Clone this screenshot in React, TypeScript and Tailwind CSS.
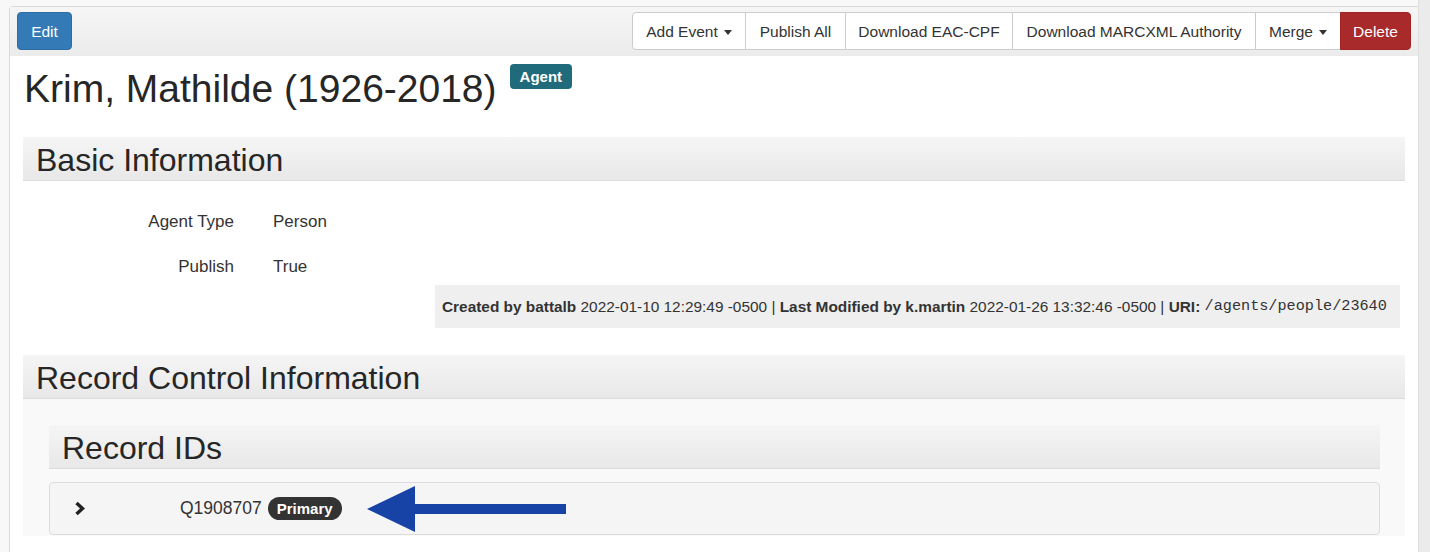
import React from 'react';

const font = { fontFamily: '"Liberation Sans", Arial, sans-serif' };

function Caret() {
  return <span className="ml-[6px] inline-block h-0 w-0 border-x-[4.5px] border-t-[5px] border-x-transparent border-t-[#333] align-middle" />;
}

function ToolButton({ label, w, caret }: { label: string; w: string; caret?: boolean }) {
  return (
    <button className={`${w} h-[38px] pt-[2px] flex items-center justify-center bg-white text-[#333] text-[15.5px] border border-[#ccc] -ml-px first:ml-0 first:rounded-l-[4px]`}>
      {label}
      {caret && <Caret />}
    </button>
  );
}

function SectionHeader({ title }: { title: string }) {
  return (
    <div className="h-[44px] bg-gradient-to-b from-[#f5f5f5] to-[#e8e8e8] border-b border-[#dcdcdc] pl-[13px] pt-[2px]">
      <h2 className="text-[32px] leading-[42px] text-[#262626]">{title}</h2>
    </div>
  );
}

export default function App() {
  return (
    <div className="min-h-screen bg-[#f8f8f8] flex" style={font}>
      <div className="flex-1 pl-[9px] pt-[6px]">
        <div className="h-full bg-white border-l border-t border-[#d9d9d9] rounded-tl-[4px]">
          {/* toolbar */}
          <div className="h-[49px] bg-gradient-to-b from-[#f6f6f6] to-[#ebebeb] flex items-start justify-between pt-[5px] pl-[7px] pr-[7px]">
            <button className="w-[55px] h-[38px] pt-[2px] rounded-[4px] bg-[#337ab7] border border-[#2e6da4] text-white text-[15.5px]">Edit</button>
            <div className="flex">
              <ToolButton label="Add Event" w="w-[114px]" caret />
              <ToolButton label="Publish All" w="w-[101px]" />
              <ToolButton label="Download EAC-CPF" w="w-[168px]" />
              <ToolButton label="Download MARCXML Authority" w="w-[244px]" />
              <ToolButton label="Merge" w="w-[86px]" caret />
              <button className="w-[71px] h-[38px] pt-[2px] -ml-px bg-[#a92a2a] border border-[#a02424] rounded-r-[4px] text-white text-[15.5px]">Delete</button>
            </div>
          </div>

          <div className="px-[13px]">
            {/* title */}
            <div className="flex items-start mt-[11px] pl-[1px]">
              <h1 className="text-[39px] leading-[44px] text-[#262626]">Krim, Mathilde (1926-2018)</h1>
              <span className="ml-[13px] -mt-[3px] h-[25px] px-[10px] rounded-[4px] bg-[#1f6a7b] text-white text-[15px] font-bold leading-[25px]">Agent</span>
            </div>

            {/* basic info */}
            <div className="mt-[26px]">
              <SectionHeader title="Basic Information" />
              <div className="mt-[29px] flex flex-col gap-[21px] text-[17px] text-[#333]">
                <div className="flex leading-[24px]">
                  <div className="w-[211px] text-right">Agent Type</div>
                  <div className="ml-[39px]">Person</div>
                </div>
                <div className="flex leading-[24px]">
                  <div className="w-[211px] text-right">Publish</div>
                  <div className="ml-[39px]">True</div>
                </div>
              </div>
              <div className="mt-[6px] ml-auto mr-[5px] w-[965px] h-[43px] bg-[#efefef] flex items-center pl-[7px] text-[15.4px] text-[#333] whitespace-nowrap">
                <b>Created by battalb</b>&nbsp;2022-01-10 12:29:49 -0500 |&nbsp;<b>Last Modified by k.martin</b>&nbsp;2022-01-26 13:32:46 -0500 |&nbsp;<b>URI:</b>&nbsp;
                <code className="text-[15.2px]" style={{ fontFamily: '"Liberation Mono", "Courier New", monospace' }}>/agents/people/23640</code>
              </div>
            </div>

            {/* record control */}
            <div className="mt-[27px]">
              <SectionHeader title="Record Control Information" />
              <div className="bg-[#f9f9f9] pl-[26px] pr-[25px] pt-[26px] pb-[1px]">
                <SectionHeader title="Record IDs" />
                <div className="mt-[13px] h-[53px] bg-[#f5f5f5] border border-[#dcdcdc] rounded-[4px] flex items-center">
                  <svg width="11" height="15" viewBox="0 0 11 15" className="ml-[24px]">
                    <path d="M2.5 2 L8.5 7.5 L2.5 13" fill="none" stroke="#222" strokeWidth="3.4" strokeLinejoin="miter" />
                  </svg>
                  <span className="ml-[95px] text-[17.5px] text-[#333]">Q1908707</span>
                  <span className="ml-[6px] h-[23px] px-[9px] rounded-full bg-[#333] text-white text-[15px] font-bold leading-[23px]">Primary</span>
                  <svg width="200" height="48" viewBox="0 0 200 48" className="ml-[25px]">
                    <polygon points="0,24 48,1 48,19 199,19 199,29 48,29 48,47" fill="#1843a6" />
                  </svg>
                </div>
              </div>
            </div>
          </div>
        </div>
      </div>
      <div className="w-[12px] bg-[#ebebeb] border-l border-[#dedede]" />
    </div>
  );
}
